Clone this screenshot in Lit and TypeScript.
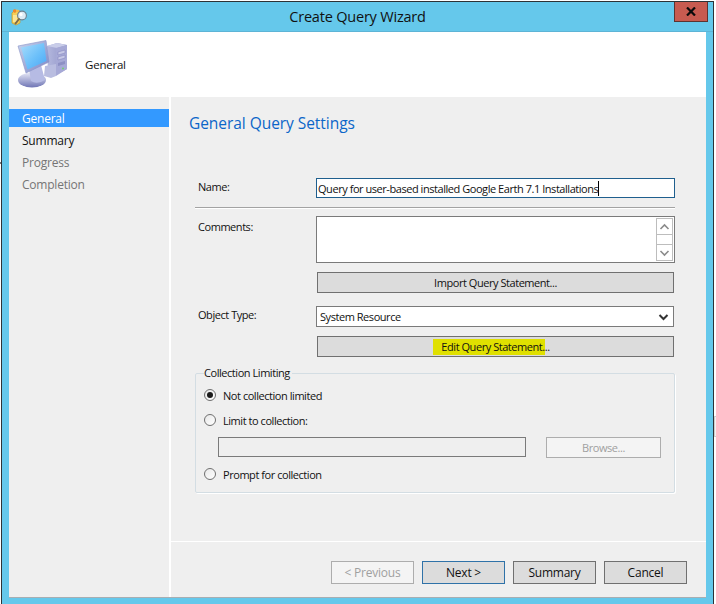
import { LitElement, html, css } from "lit";
import { customElement } from "lit/decorators.js";

const titleIcon = html`<svg class="ticon" width="17" height="18" viewBox="0 0 17 18">
  <path d="M1 5 L3 3 L9 3 L9 15 L5 17 L1 15 Z" fill="#f6cf57" stroke="#c99a2a" stroke-width=".7"/>
  <path d="M2 2 L4 1 L6 3 L4 5 L2 4 Z" fill="#f08a2c"/>
  <path d="M5 1.5 L8 2 L8 4 L5 4 Z" fill="#f7b84a"/>
  <rect x="2" y="7" width="4" height="7" fill="#fbe596"/>
  <circle cx="11" cy="7.5" r="4.4" fill="#dcecf5" stroke="#6d7f8c" stroke-width="1.1"/>
  <circle cx="10" cy="6.4" r="1.6" fill="#fff"/>
  <path d="M8 11 L4.5 15.5" stroke="#7b6a4a" stroke-width="2" stroke-linecap="round"/>
</svg>`;

const monitorIcon = html`<svg class="micon" width="50" height="50" viewBox="0 0 50 50">
  <defs>
    <linearGradient id="scr" x1="0" y1="0" x2="1" y2="1">
      <stop offset="0" stop-color="#a8dcfb"/><stop offset=".55" stop-color="#6cc0fa"/><stop offset="1" stop-color="#4aa6f5"/>
    </linearGradient>
    <linearGradient id="frm" x1="0" y1="0" x2="1" y2="1">
      <stop offset="0" stop-color="#c9d4ee"/><stop offset="1" stop-color="#7d86c4"/>
    </linearGradient>
    <linearGradient id="twr" x1="0" y1="0" x2="1" y2="0">
      <stop offset="0" stop-color="#b4b8de"/><stop offset="1" stop-color="#8f93c6"/>
    </linearGradient>
    <linearGradient id="bas" x1="0" y1="0" x2="0" y2="1">
      <stop offset="0" stop-color="#e6e8f6"/><stop offset="1" stop-color="#6f75b5"/>
    </linearGradient>
  </defs>
  <path d="M30 7 L40 4 L50 6 L50 30 L37 37 L31 35 Z" fill="url(#twr)"/>
  <path d="M30 7 L40 4 L50 6 L40 9 Z" fill="#c9cde9"/>
  <path d="M39 9 L50 6 L50 30 L39 37 Z" fill="#a6a9d6"/>
  <path d="M41 13 L48 11 L48 14 L41 16 Z M41 18 L48 16 L48 19 L41 21 Z" fill="#c6c8e6" stroke="#8082ba" stroke-width=".5"/>
  <path d="M41 24 L48 22 L48 25 L41 27 Z" fill="#8d90c4"/>
  <circle cx="46" cy="29.5" r="1" fill="#6fd06f"/>
  <path d="M28 27 L39 25 L39 37 L34 39 L27 37 Z" fill="#b9bde0"/>
  <ellipse cx="15" cy="41" rx="14" ry="7.5" fill="url(#bas)"/>
  <path d="M12 30 L24 26 L28 41 Q20 46 14 42 Z" fill="#b6bbe4"/>
  <path d="M1 7 L29 1.5 L32 23 L9 34 Z" fill="url(#frm)" stroke="#8a93c8" stroke-width=".6"/>
  <path d="M4 8.5 L27 4 L29.5 22 L10.5 30.5 Z" fill="url(#scr)"/>
</svg>`;

@customElement("app-root")
export class AppRoot extends LitElement {
  static styles = css`
    :host {
      display: block;
      position: relative;
      width: 716px;
      height: 604px;
      background: #fff;
      overflow: hidden;
      font-family: "Open Sans", "Noto Sans", sans-serif;
      font-size: 11.5px;
      letter-spacing: -0.22px;
      color: #111;
    }
    .behind-a {
      position: absolute;
      left: 0;
      top: 162px;
      width: 1px;
      height: 2px;
      background: #777;
    }
    .behind-b {
      position: absolute;
      left: 714px;
      top: 416px;
      width: 2px;
      height: 21px;
      box-sizing: border-box;
      border: 1px solid #cfcfcf;
      border-right: 0;
      background: #f2f2f2;
    }
    .win {
      margin: 1px 0 0 1px;
      height: 603px;
      border: 1px solid #2e3336;
      border-width: 1px 1px 0 1px;
      background: #65c8eb;
      padding: 0 7px 0 7px;
      box-sizing: content-box;
      width: 697px;
      display: flex;
      flex-direction: column;
    }
    .titlebar {
      height: 29px;
      margin: 0 -7px 0 -7px;
      border-bottom: 1px solid #5db4d6;
      display: grid;
      grid-template-columns: 1fr auto 1fr;
      align-items: start;
      flex: none;
    }
    .ticon { margin: 6px 0 0 9px; display: block; }
    .title {
      font-size: 14.5px;
      letter-spacing: -0.2px;
      line-height: 30px;
      color: #111;
    }
    .close {
      justify-self: end;
      margin-right: 5px;
      width: 34px;
      height: 20px;
      box-sizing: border-box;
      background: #c75b50;
      border: 1px solid #5d3330;
      border-top: 0;
      display: flex;
      align-items: center;
      justify-content: center;
    }
    .content {
      width: 697px;
      height: 565px;
      display: flex;
      flex-direction: column;
      background: #efefef;
      border-bottom: 1px solid #a8aeb2;
      flex: none;
    }
    .header {
      height: 65px;
      background: #fff;
      display: flex;
      align-items: center;
      padding-left: 8px;
      flex: none;
    }
    .micon { display: block; margin-top: -1px; }
    .header span { margin-left: 18px; margin-top: -1px; }
    .body { flex: 1; display: flex; min-height: 0; }
    .nav {
      width: 160px;
      flex: none;
      padding-top: 12px;
      box-sizing: border-box;
      display: flex;
      flex-direction: column;
    }
    .nav div {
      padding-left: 13px;
      height: 22px;
      line-height: 19px;
      font-size: 12px;
      color: #757575;
    }
    .nav .sel {
      height: 18px;
      line-height: 19px;
      margin-bottom: 4px;
      background: #3399ff;
      color: #fff;
    }
    .nav .act { color: #111; }
    .panel {
      flex: 1;
      border-left: 2px solid #fff;
      display: flex;
      flex-direction: column;
      min-width: 0;
    }
    .main { flex: 1; padding: 16px 0 0 24px; box-sizing: border-box; }
    h1 {
      margin: 0 0 0 -6px;
      font-size: 15.5px;
      font-weight: 400;
      letter-spacing: -0.05px;
      line-height: 20px;
      height: 20px;
      color: #0b66c9;
    }
    .form {
      width: 480px;
      margin-top: 45px;
      display: flex;
      flex-direction: column;
      font-size: 11px;
      letter-spacing: -0.45px;
    }
    .row { display: grid; grid-template-columns: 121px 1fr; }
    .lab { padding-left: 3px; line-height: 18px; }
    .field {
      box-sizing: border-box;
      background: #fff;
      border: 1px solid #7a7a7a;
      padding-left: 1px;
      white-space: nowrap;
      overflow: hidden;
    }
    .name { height: 20px; line-height: 19px; border-color: #1f5f8e; }
    .caret { border-right: 1px solid #000; }
    .sep {
      height: 1px;
      margin-top: 9px;
      background: #a3a3a3;
      border-bottom: 1px solid #fff;
    }
    .comments { margin-top: 7px; }
    .comments .lab { padding-top: 2px; }
    .area {
      height: 47px;
      display: flex;
      justify-content: flex-end;
      padding: 1px 1px 1px 0;
    }
    .scroll {
      width: 17px;
      box-sizing: border-box;
      border: 1px solid #bdbdbd;
      display: grid;
      grid-template-rows: 15px 1fr 15px;
      background: #fff;
    }
    .scroll span { display: flex; align-items: center; justify-content: center; }
    .scroll span:nth-child(2) { border: 1px solid #bdbdbd; border-width: 1px 0; }
    .btn {
      box-sizing: border-box;
      background: #dcdcdc;
      border: 1px solid #707070;
      display: flex;
      align-items: center;
      justify-content: center;
      white-space: nowrap;
    }
    .wide { height: 21px; margin-left: 1px; width: 357px; }
    .import { margin-top: 9px; }
    .otype { margin-top: 13px; }
    .select {
      height: 21px;
      width: 358px;
      line-height: 19px;
      padding-left: 3px;
      display: flex;
      justify-content: space-between;
      align-items: center;
    }
    .select svg { margin-right: 4px; }
    .edit { margin-top: 9px; }
    .hl {
      background: #e0e000;
      padding: 0 0 0 8px;
      line-height: 16px;
      margin-left: -8px;
    }
    fieldset {
      margin: 9px 0 0;
      padding: 0 0 0 8px;
      height: 127px;
      box-sizing: border-box;
      border: 1px solid #d3dde3;
      border-radius: 2px;
      box-shadow: 1px 1px 0 #fff;
      min-width: 0;
    }
    legend {
      padding: 0 2px 0 0;
      line-height: 14px;
      height: 14px;
    }
    .radio {
      display: flex;
      align-items: center;
      height: 16px;
      gap: 7px;
    }
    .r1 { margin-top: 7px; }
    .r2 { margin-top: 9px; }
    .r3 { margin-top: 8px; }
    .dot {
      width: 12px;
      height: 12px;
      box-sizing: border-box;
      border: 1px solid #6f6f6f;
      border-radius: 50%;
      background: linear-gradient(135deg, #e8e8e8, #fff);
      display: flex;
      align-items: center;
      justify-content: center;
      flex: none;
    }
    .dot.on::after {
      content: "";
      width: 6px;
      height: 6px;
      border-radius: 50%;
      background: #1a1a1a;
    }
    .pick { display: flex; margin: 9px 0 0 14px; align-items: flex-start; gap: 20px; }
    .disabled {
      width: 308px;
      height: 20px;
      box-sizing: border-box;
      background: #efefef;
      border: 1px solid #7a7a7a;
    }
    .browse {
      width: 115px;
      height: 21px;
      background: #f4f4f4;
      border-color: #adadad;
      color: #a0a0a0;
    }
    .footer {
      height: 55px;
      flex: none;
      border-top: 1px solid #fff;
      display: flex;
      justify-content: flex-end;
      gap: 8px;
      padding: 0 19px 0 0;
    }
    .footer .btn {
      width: 83px;
      height: 23px;
      margin-top: 19px;
      font-size: 12px;
    }
    .footer .off {
      background: #f4f4f4;
      border-color: #adadad;
      color: #a0a0a0;
    }
    .footer .def { border-color: #2f72a8; }
  `;

  render() {
    const chev = (d: string, c: string, w: number) =>
      html`<svg width="11" height="8" viewBox="0 0 11 8"><polyline points=${d} fill="none" stroke=${c} stroke-width=${w}/></svg>`;
    return html`
      <div class="behind-a"></div>
      <div class="behind-b"></div>
      <div class="win">
        <div class="titlebar">
          <div>${titleIcon}</div>
          <div class="title">Create Query Wizard</div>
          <div class="close">
            <svg width="10" height="9" viewBox="0 0 10 9"><path d="M1 .5 L9 8.5 M9 .5 L1 8.5" stroke="#0b0b0b" stroke-width="2.2" fill="none"/></svg>
          </div>
        </div>
        <div class="content">
          <div class="header">${monitorIcon}<span>General</span></div>
          <div class="body">
            <div class="nav">
              <div class="sel">General</div>
              <div class="act">Summary</div>
              <div>Progress</div>
              <div>Completion</div>
            </div>
            <div class="panel">
              <div class="main">
                <h1>General Query Settings</h1>
                <div class="form">
                  <div class="row">
                    <div class="lab">Name:</div>
                    <div class="field name"><span class="caret">Query for user-based installed Google Earth 7.1 Installations</span></div>
                  </div>
                  <div class="sep"></div>
                  <div class="row comments">
                    <div class="lab">Comments:</div>
                    <div class="field area">
                      <div class="scroll">
                        <span>${chev("1.5,6 5.5,2 9.5,6", "#8a8a8a", 1.6)}</span>
                        <span></span>
                        <span>${chev("1.5,2 5.5,6 9.5,2", "#8a8a8a", 1.6)}</span>
                      </div>
                    </div>
                  </div>
                  <div class="row import"><div></div><div class="btn wide">Import Query Statement...</div></div>
                  <div class="row otype">
                    <div class="lab">Object Type:</div>
                    <div class="field select"><span>System Resource</span>${chev("1.5,2 5.5,6 9.5,2", "#333", 2)}</div>
                  </div>
                  <div class="row edit"><div></div><div class="btn wide"><span class="hl">Edit Query Statement.</span>..</div></div>
                  <fieldset>
                    <legend>Collection Limiting</legend>
                    <div class="radio r1"><span class="dot on"></span>Not collection limited</div>
                    <div class="radio r2"><span class="dot"></span>Limit to collection:</div>
                    <div class="pick"><div class="disabled"></div><div class="btn browse">Browse...</div></div>
                    <div class="radio r3"><span class="dot"></span>Prompt for collection</div>
                  </fieldset>
                </div>
              </div>
              <div class="footer">
                <div class="btn off">&lt; Previous</div>
                <div class="btn def">Next &gt;</div>
                <div class="btn">Summary</div>
                <div class="btn">Cancel</div>
              </div>
            </div>
          </div>
        </div>
      </div>
    `;
  }
}
